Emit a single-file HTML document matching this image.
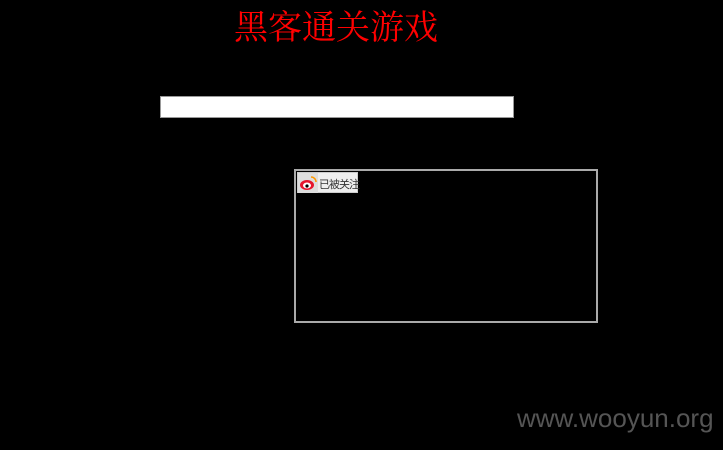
<!DOCTYPE html>
<html><head><meta charset="utf-8"><style>
body{margin:0;background:#000;width:723px;height:450px;overflow:hidden;position:relative;font-family:"Liberation Sans",sans-serif}
.t{position:absolute;left:234px;top:0px;color:#f00;font:34px "Liberation Serif","Noto Serif CJK SC",serif;white-space:nowrap}
.in{position:absolute;left:160px;top:96px;width:352px;height:20px;background:#fff;border:1px solid #999}
.box{position:absolute;left:294px;top:169px;width:300px;height:150px;border:2px solid #aaa;box-sizing:content-box}
.b{position:absolute;left:1px;top:1px;width:61px;height:21px;background:#eee;border:1px solid #ccc;box-sizing:border-box}
.b .ic{position:absolute;left:0;top:0;width:20px;height:20px;background:#ddd}
.b span{position:absolute;left:21px;top:3px;font:11px "Liberation Sans","Noto Sans CJK SC",sans-serif;color:#333;letter-spacing:-1px;white-space:nowrap}
.w{position:absolute;left:517px;top:403px;color:#555;font-size:26px;white-space:nowrap}
</style></head><body>
<div class="t">黑客通关游戏</div>
<div class="in"></div>
<div class="box"><div class="b"><div class="ic"><svg width="20" height="20"><ellipse cx="9" cy="12" rx="7" ry="5" fill="#e6162d"/><ellipse cx="9" cy="12.5" rx="4" ry="3" fill="#fff"/><circle cx="9" cy="13" r="1.6" fill="#000"/><path d="M13 4a5 5 0 0 1 5 5" stroke="#f90" stroke-width="1.5" fill="none"/></svg></div><span>已被关注</span></div></div>
<div class="w">www.wooyun.org</div>
</body></html>
